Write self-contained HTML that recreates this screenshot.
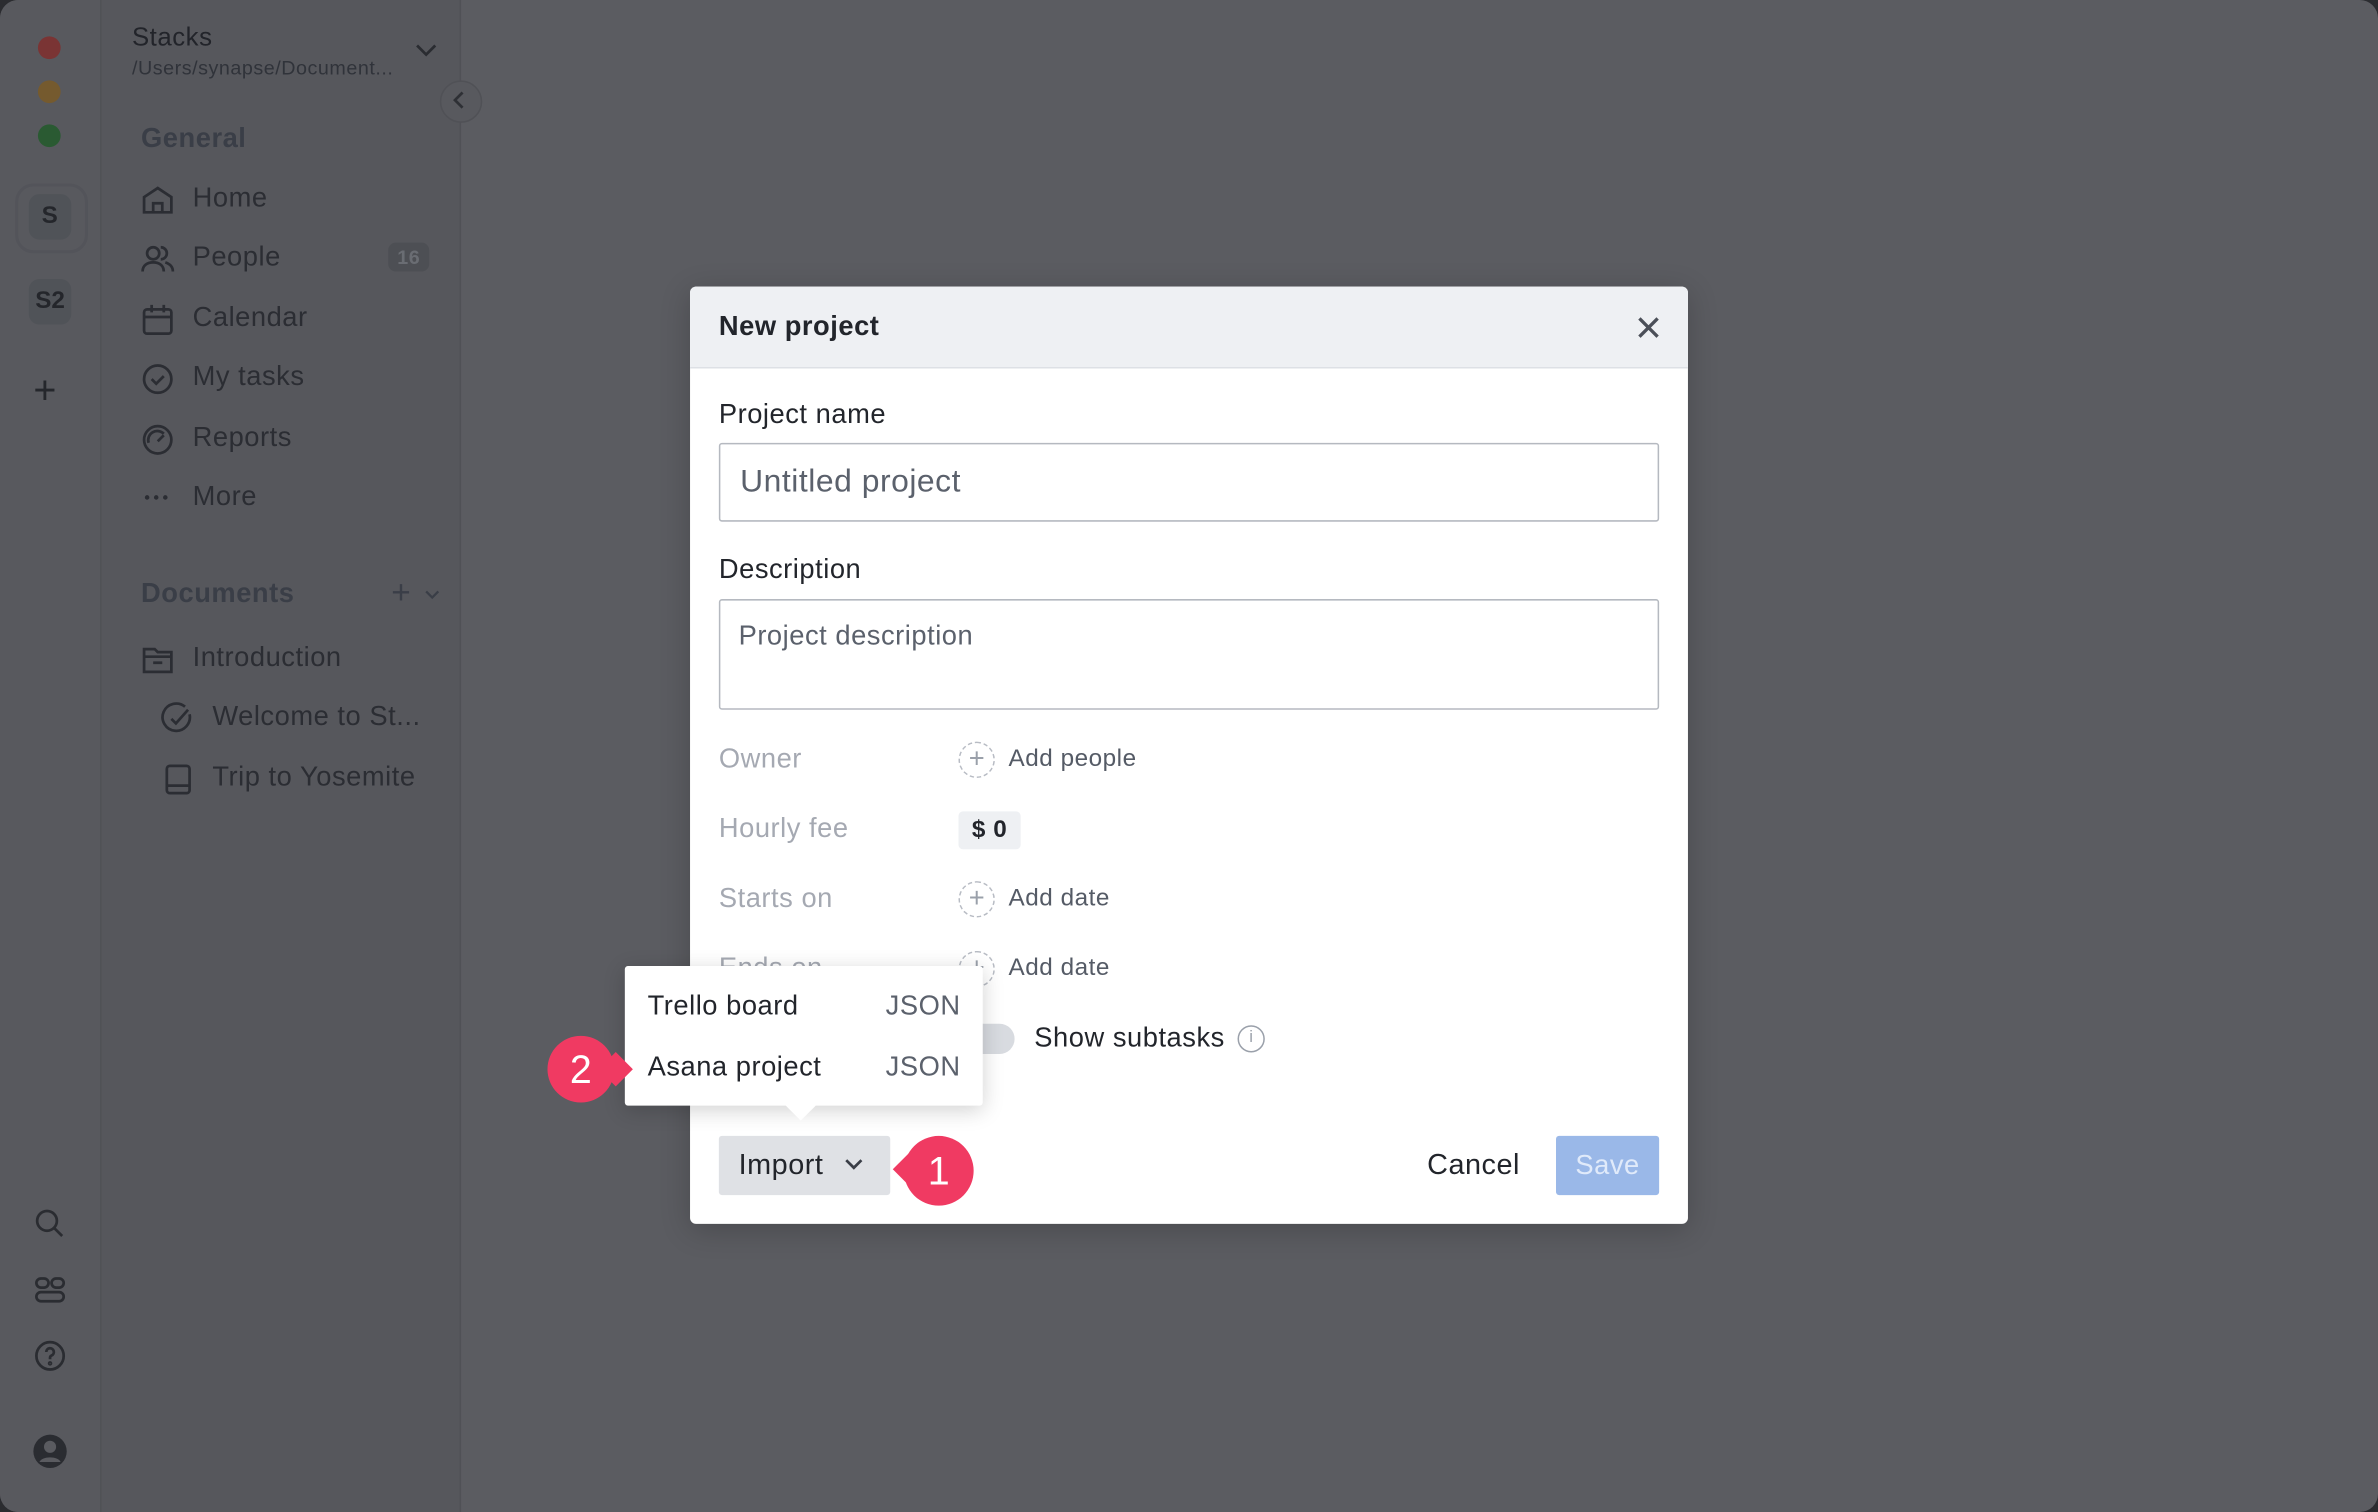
<!DOCTYPE html>
<html><head><meta charset="utf-8"><style>
html,body{margin:0;padding:0;width:2378px;height:1512px;overflow:hidden;background:#2b2c30}
#w{position:absolute;left:0;top:0;width:1568px;height:997px;transform:scale(1.51658);transform-origin:0 0;font-family:"Liberation Sans",sans-serif;background:#5b5c61;border-radius:12px;overflow:hidden;letter-spacing:0.35px}
.abs{position:absolute}
.rail{left:0;top:0;width:66px;height:997px;background:#58595e;border-right:1px solid #505156}
.side{left:67px;top:0;width:236px;height:997px;background:#56575c;border-right:1px solid #505156}
.dot{width:15px;height:15px;border-radius:50%;left:25px}
.nav{left:93px;font-size:18px;color:#2b2d33}
.nav span{position:absolute;left:34px;top:0;white-space:nowrap}
.nav svg{position:absolute;left:0;top:1px}
.hd{font-size:18px;color:#3a3e47;font-weight:bold}
.dlg{left:455px;top:189px;width:658px;height:618px;background:#fff;border-radius:4px;box-shadow:0 4px 20px rgba(0,0,0,.2)}
.lbl{font-size:18px;color:#a5a9b2}
.add{font-size:16px;color:#555b66}
.circ{width:24px;height:24px;border:1px dashed #b8bcc4;border-radius:50%;box-sizing:border-box;text-align:center;line-height:21px;color:#9aa0aa;font-size:18px;letter-spacing:0}
.badge{width:44px;height:44px;border-radius:50%;background:#f03a62;color:#fff;font-size:26px;text-align:center;line-height:44px;letter-spacing:0}
</style></head><body><div id="w">
<div class="abs rail"></div>
<div class="abs dot" style="top:24px;background:#7a3434"></div>
<div class="abs dot" style="top:53px;background:#755a2e"></div>
<div class="abs dot" style="top:82px;background:#2a5a32"></div>
<div class="abs" style="left:10px;top:121px;width:44px;height:42px;border:2px solid #53545a;border-radius:12px"></div>
<div class="abs" style="left:19px;top:128px;width:28px;height:30px;background:#505358;border-radius:7px;text-align:center;line-height:30px;font-weight:bold;font-size:16px;color:#24262b">S</div>
<div class="abs" style="left:19px;top:184px;width:28px;height:30px;background:#505358;border-radius:7px;text-align:center;line-height:30px;font-weight:bold;font-size:16px;color:#24262b;letter-spacing:0">S2</div>
<div class="abs" style="left:22px;top:244px;font-size:26px;color:#25272c;line-height:26px">+</div>
<svg class="abs" style="left:22px;top:796px" width="22" height="22" viewBox="0 0 22 22" fill="none" stroke="#2a2c31" stroke-width="1.8"><circle cx="9" cy="9" r="6.5"/><path d="M14 14l5 5"/></svg>
<svg class="abs" style="left:22px;top:840px" width="22" height="22" viewBox="0 0 22 22" fill="none" stroke="#2a2c31" stroke-width="1.8"><rect x="2" y="3" width="8" height="6" rx="3"/><rect x="12" y="3" width="8" height="6" rx="3"/><rect x="2" y="12" width="18" height="6" rx="3"/></svg>
<svg class="abs" style="left:22px;top:883px" width="22" height="22" viewBox="0 0 22 22" fill="none" stroke="#2a2c31" stroke-width="1.8"><circle cx="11" cy="11" r="9"/><path d="M8.5 8.5a2.5 2.5 0 1 1 3.5 2.3c-.7.3-1 .8-1 1.5v1"/><circle cx="11" cy="16" r=".6"/></svg>
<svg class="abs" style="left:21px;top:945px" width="24" height="24" viewBox="0 0 24 24"><circle cx="12" cy="12" r="11" fill="#2a2c31"/><circle cx="12" cy="9" r="4" fill="#5a5b60"/><path d="M5 19c2-4 12-4 14 0" fill="#5a5b60"/></svg>

<div class="abs side"></div>
<div class="abs" style="left:87px;top:15px;font-size:17px;color:#22242a">Stacks</div>
<div class="abs" style="left:87px;top:37px;font-size:13px;color:#30333a">/Users/synapse/Document...</div>
<svg class="abs" style="left:273px;top:27px" width="16" height="12" viewBox="0 0 16 12" fill="none" stroke="#2a2c31" stroke-width="1.8"><path d="M2 3l6 6 6-6"/></svg>
<div class="abs" style="left:290px;top:53px;width:26px;height:26px;border-radius:50%;background:#58595e;border:1px solid #505156"></div>
<svg class="abs" style="left:297px;top:60px" width="12" height="12" viewBox="0 0 12 12" fill="none" stroke="#2e3035" stroke-width="1.8"><path d="M8 1L3 6l5 5"/></svg>
<div class="abs hd" style="left:93px;top:81px">General</div>
<div class="abs nav" style="top:120px"><svg width="22" height="22" viewBox="0 0 22 22" fill="none" stroke="#2b2d33" stroke-width="1.8"><path d="M2 9l9-6 9 6v10H2z"/><path d="M8 19v-6h6v6"/></svg><span>Home</span></div>
<div class="abs nav" style="top:159px"><svg width="22" height="22" viewBox="0 0 22 22" fill="none" stroke="#2b2d33" stroke-width="1.8"><circle cx="8" cy="7" r="4"/><path d="M1 19c0-4 3-6 7-6s7 2 7 6"/><path d="M13 3a4 4 0 0 1 0 8M16 13c3 1 5 3 5 6"/></svg><span>People</span></div>
<div class="abs" style="left:256px;top:160px;width:27px;height:19px;border-radius:5px;background:#4d4f54;color:#6a6d73;font-size:13px;font-weight:bold;text-align:center;line-height:19px">16</div>
<div class="abs nav" style="top:199px"><svg width="22" height="22" viewBox="0 0 22 22" fill="none" stroke="#2b2d33" stroke-width="1.8"><rect x="2" y="4" width="18" height="16" rx="2"/><path d="M2 9h18M7 1v5M15 1v5"/></svg><span>Calendar</span></div>
<div class="abs nav" style="top:238px"><svg width="22" height="22" viewBox="0 0 22 22" fill="none" stroke="#2b2d33" stroke-width="1.8"><circle cx="11" cy="11" r="9"/><path d="M7 11l3 3 5-5"/></svg><span>My tasks</span></div>
<div class="abs nav" style="top:278px"><svg width="22" height="22" viewBox="0 0 22 22" fill="none" stroke="#2b2d33" stroke-width="1.8"><circle cx="11" cy="11" r="9"/><path d="M5 13a6 6 0 0 1 10-6M11 12l4-4"/></svg><span>Reports</span></div>
<div class="abs nav" style="top:317px"><svg width="22" height="22" viewBox="0 0 22 22" fill="#2b2d33"><circle cx="4" cy="10" r="1.5"/><circle cx="10" cy="10" r="1.5"/><circle cx="16" cy="10" r="1.5"/></svg><span>More</span></div>
<div class="abs hd" style="left:93px;top:381px">Documents</div>
<div class="abs" style="left:258px;top:378px;font-size:22px;color:#3a3e47">+</div>
<svg class="abs" style="left:279px;top:388px" width="12" height="8" viewBox="0 0 12 8" fill="none" stroke="#3a3e47" stroke-width="1.5"><path d="M2 2l4 4 4-4"/></svg>
<div class="abs nav" style="top:423px"><svg width="22" height="22" viewBox="0 0 22 22" fill="none" stroke="#2b2d33" stroke-width="1.8"><path d="M2 4h7l2 2h9v13H2z"/><path d="M2 9h18M8 13h6"/></svg><span>Introduction</span></div>
<div class="abs nav" style="top:462px;left:106px"><svg width="22" height="22" viewBox="0 0 22 22" fill="none" stroke="#2b2d33" stroke-width="1.8"><path d="M19 8a9 9 0 1 1-3-5"/><path d="M7 11l3 3 8-9"/></svg><span>Welcome to St...</span></div>
<div class="abs nav" style="top:502px;left:106px"><svg width="22" height="22" viewBox="0 0 22 22" fill="none" stroke="#2b2d33" stroke-width="1.8"><rect x="4" y="2" width="15" height="18" rx="2"/><path d="M4 15h15"/></svg><span>Trip to Yosemite</span></div>

<div class="abs dlg">
 <div class="abs" style="left:0;top:0;width:658px;height:53px;background:#eef0f3;border-bottom:1px solid #dde0e5;border-radius:4px 4px 0 0"></div>
 <div class="abs" style="left:19px;top:16px;font-size:18px;font-weight:bold;color:#22252b">New project</div>
 <svg class="abs" style="left:624px;top:19px" width="16" height="16" viewBox="0 0 16 16" stroke="#4b4f58" stroke-width="2.2"><path d="M2 2l12 12M14 2L2 14"/></svg>
 <div class="abs" style="left:19px;top:74px;font-size:18px;color:#22252b">Project name</div>
 <div class="abs" style="left:19px;top:103px;width:620px;height:52px;border:1px solid #b5b9c0;box-sizing:border-box;border-radius:2px"></div>
 <div class="abs" style="left:33px;top:117px;font-size:21px;color:#5b616c">Untitled project</div>
 <div class="abs" style="left:19px;top:176px;font-size:18px;color:#22252b">Description</div>
 <div class="abs" style="left:19px;top:206px;width:620px;height:73px;border:1px solid #b5b9c0;box-sizing:border-box;border-radius:2px"></div>
 <div class="abs" style="left:32px;top:220px;font-size:18px;color:#5b616c">Project description</div>
 <div class="abs lbl" style="left:19px;top:301px">Owner</div>
 <div class="abs circ" style="left:177px;top:300px">+</div><div class="abs add" style="left:210px;top:303px">Add people</div>
 <div class="abs lbl" style="left:19px;top:347px">Hourly fee</div>
 <div class="abs" style="left:177px;top:346px;width:41px;height:25px;background:#eef0f3;border-radius:3px;font-size:16px;font-weight:bold;color:#22252b;text-align:center;line-height:25px">$ 0</div>
 <div class="abs lbl" style="left:19px;top:393px">Starts on</div>
 <div class="abs circ" style="left:177px;top:392px">+</div><div class="abs add" style="left:210px;top:395px">Add date</div>
 <div class="abs lbl" style="left:19px;top:439px">Ends on</div>
 <div class="abs circ" style="left:177px;top:438px">+</div><div class="abs add" style="left:210px;top:441px">Add date</div>
 <div class="abs" style="left:180px;top:486px;width:34px;height:20px;border-radius:10px;background:#d8dbe0"></div>
 <div class="abs" style="left:227px;top:485px;font-size:18px;color:#22252b">Show subtasks</div>
 <div class="abs" style="left:361px;top:487px;width:18px;height:18px;border:1.5px solid #9aa0aa;border-radius:50%;box-sizing:border-box;font-size:11px;color:#9aa0aa;text-align:center;line-height:15px;letter-spacing:0">i</div>
 <div class="abs" style="left:19px;top:560px;width:113px;height:39px;background:#dfe1e5;border-radius:2px"></div>
 <div class="abs" style="left:32px;top:569px;font-size:19px;color:#22252b">Import</div>
 <svg class="abs" style="left:101px;top:574px" width="14" height="10" viewBox="0 0 14 10" fill="none" stroke="#3a3e47" stroke-width="1.8"><path d="M2 2l5 5 5-5"/></svg>
 <div class="abs" style="left:486px;top:569px;font-size:19px;color:#22252b">Cancel</div>
 <div class="abs" style="left:571px;top:560px;width:68px;height:39px;background:#9ab8e8;border-radius:2px;color:#e0eafa;font-size:18px;text-align:center;line-height:39px">Save</div>
</div>

<div class="abs" style="left:412px;top:637px;width:236px;height:92px;background:#fff;border-radius:2px;box-shadow:0 3px 14px rgba(0,0,0,.18)"></div>
<div class="abs" style="left:521px;top:722px;width:14px;height:14px;background:#fff;transform:rotate(45deg)"></div>
<div class="abs" style="left:427px;top:653px;font-size:18px;color:#22252b">Trello board</div>
<div class="abs" style="left:584px;top:653px;font-size:18px;color:#5b616c">JSON</div>
<div class="abs" style="left:427px;top:693px;font-size:18px;color:#22252b">Asana project</div>
<div class="abs" style="left:584px;top:693px;font-size:18px;color:#5b616c">JSON</div>

<div class="abs" style="left:398px;top:697px;width:16px;height:16px;background:#f03a62;transform:rotate(45deg)"></div>
<div class="abs badge" style="left:361px;top:683px">2</div>
<div class="abs" style="left:592px;top:763px;width:16px;height:16px;background:#f03a62;transform:rotate(45deg)"></div>
<div class="abs badge" style="left:596px;top:749px;width:46px;height:46px;line-height:46px">1</div>
</div></body></html>
